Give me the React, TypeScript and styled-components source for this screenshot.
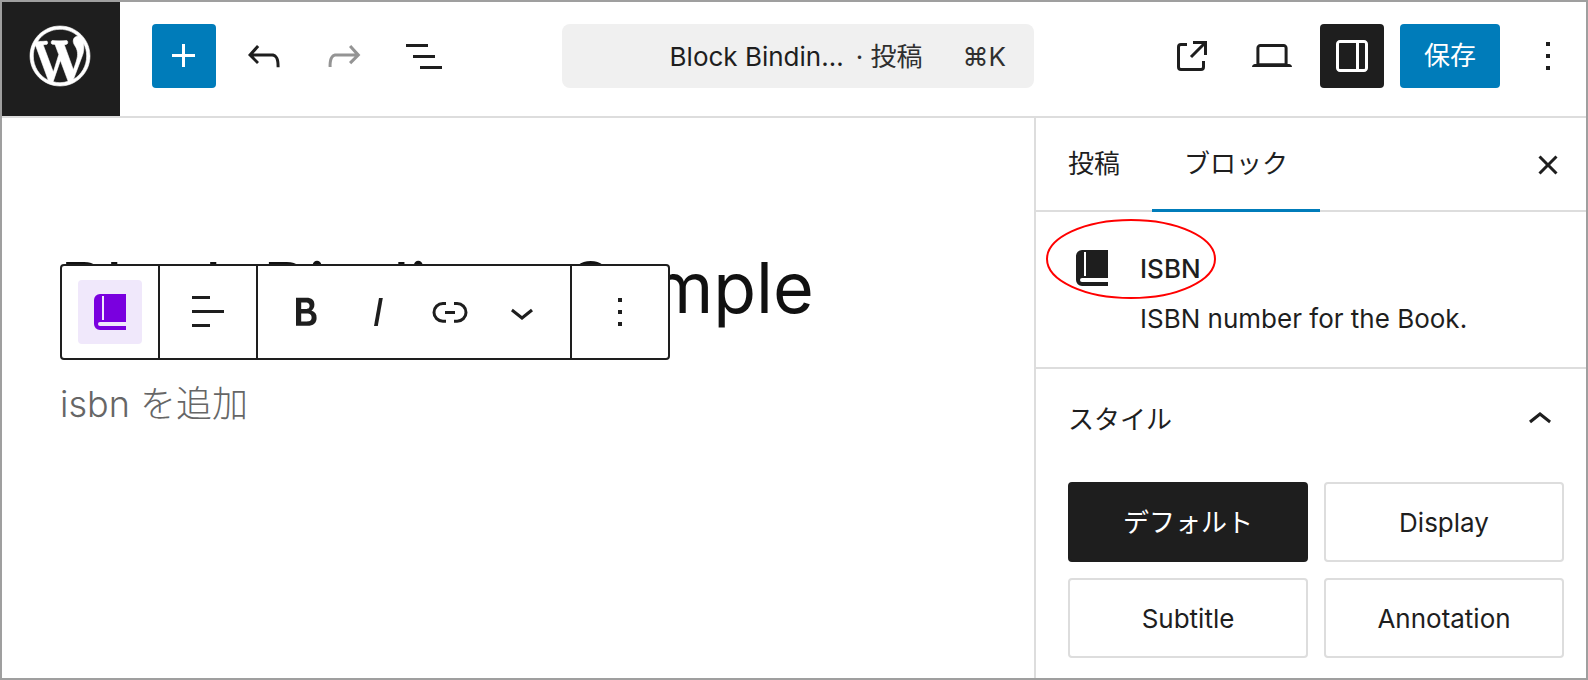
import React from "react";
import styled, { createGlobalStyle, css } from "styled-components";

const ink = "#1e1e1e";
const blue = "#007cba";
const line = "#dddddd";

const GlobalStyle = createGlobalStyle`
  *, *::before, *::after { box-sizing: border-box; }
  body {
    margin: 0;
    color: ${ink};
    background: #fff;
    font-family: Inter, "Noto Sans CJK JP", sans-serif;
    font-size: 26px;
    line-height: 36px;
  }
  button, input { font: inherit; color: inherit; }
`;

const Frame = styled.div`
  display: flex;
  flex-direction: column;
  min-height: 100vh;
  border: 2px solid #9f9f9f;
`;

const Header = styled.header`
  display: flex;
  align-items: center;
  padding-right: 6px;
  border-bottom: 2px solid ${line};
`;

const HomeLink = styled.a`
  display: flex;
  align-items: center;
  justify-content: center;
  width: 118px;
  height: 114px;
  padding: 0 2px 6px 0;
  flex: none;
  color: #fff;
  background: ${ink};
`;

const Tools = styled.div`
  display: flex;
  flex: none;
  gap: 16px;
  padding-bottom: 6px;
`;

const StartTools = styled(Tools)`
  margin-left: 32px;
`;

type Tone = "plain" | "primary" | "pressed" | "block";

const tones = {
  plain: css`background: transparent;`,
  primary: css`background: ${blue}; color: #fff;`,
  pressed: css`background: ${ink}; color: #fff;`,
  block: css`background: #f0e8fb; color: #7a00df;`,
};

const Button = styled.button<{ $tone?: Tone; $wide?: boolean }>`
  display: flex;
  align-items: center;
  justify-content: center;
  min-width: ${(p) => (p.$wide ? 72 : 64)}px;
  height: 64px;
  padding: 0;
  border: 0;
  border-radius: 4px;
  ${(p) => tones[p.$tone ?? "plain"]}
  &:disabled { color: #949494; }
`;

const SaveButton = styled(Button)`
  padding: 0 24px;
`;

const DocumentBar = styled.button`
  display: flex;
  flex: 1;
  align-items: center;
  justify-content: flex-end;
  min-width: 0;
  height: 64px;
  margin: 0 126px 6px 106px;
  padding: 2px 28px 0;
  border: 0;
  border-radius: 8px;
  background: #f0f0f0;
  white-space: nowrap;
`;

const DocumentType = styled.span`
  margin-left: 12px;
  color: #2f2f2f;
`;

const Shortcut = styled.span`
  margin-left: 40px;
  color: #2f2f2f;
`;

const Body = styled.div`
  display: flex;
  flex: 1;
`;

const Canvas = styled.main`
  flex: 1;
  min-width: 0;
  padding: 126px 58px 0;
`;

const TitleArea = styled.div`
  position: relative;
`;

const Title = styled.h1`
  margin: 0;
  font-size: 70px;
  font-weight: 400;
  line-height: 88px;
  color: #111;
  white-space: nowrap;
`;

const BlockToolbar = styled.div`
  position: absolute;
  top: 20px;
  left: 0;
  display: flex;
  border: 2px solid ${ink};
  border-radius: 4px;
  background: #fff;
`;

const ToolbarGroup = styled.div<{ $tight?: boolean }>`
  display: flex;
  padding: 14px ${(p) => (p.$tight ? 12 : 16)}px;
  & + & { border-left: 2px solid ${ink}; }
`;

const IsbnField = styled.input`
  display: block;
  width: 100%;
  margin-top: 44px;
  padding: 0;
  border: 0;
  outline: 0;
  font-size: 36px;
  font-weight: 300;
  line-height: 56px;
  &::placeholder { color: #666; opacity: 1; }
`;

const Sidebar = styled.aside`
  width: 552px;
  flex: none;
  border-left: 2px solid ${line};
`;

const TabBar = styled.div`
  display: flex;
  align-items: stretch;
  height: 94px;
  padding-right: 6px;
  box-shadow: inset 0 -2px ${line};
`;

const Tab = styled.button<{ $active?: boolean }>`
  padding: 0 32px 2px;
  border: 0;
  background: transparent;
  box-shadow: ${(p) => (p.$active ? `inset 0 -3px ${blue}` : "none")};
`;

const CloseButton = styled(Button)`
  align-self: center;
  margin-left: auto;
`;

const BlockCard = styled.section`
  position: relative;
  display: flex;
  gap: 24px;
  padding: 32px 22px 30px 32px;
  border-bottom: 2px solid ${line};
`;

const CardIcon = styled.div`
  display: flex;
  justify-content: center;
  width: 48px;
  padding-top: 6px;
`;

const CardText = styled.div`
  display: flex;
  flex-direction: column;
  gap: 14px;
  padding-top: 7px;
`;

const CardTitle = styled.h2`
  margin: 0;
  font-size: 26px;
  font-weight: 500;
  line-height: 36px;
`;

const CardDescription = styled.p`
  margin: 0;
`;

const Callout = styled.svg`
  position: absolute;
  top: 6px;
  left: 9px;
`;

const StylesPanel = styled.section`
  padding: 0 22px 20px 32px;
`;

const PanelTitle = styled.h2`
  margin: 0;
  font-size: 26px;
  font-weight: 400;
`;

const PanelToggle = styled.button`
  display: flex;
  align-items: center;
  justify-content: space-between;
  width: 100%;
  height: 102px;
  padding: 0;
  border: 0;
  background: transparent;
`;

const StyleGrid = styled.div`
  display: grid;
  grid-template-columns: 1fr 1fr;
  gap: 16px;
  padding-top: 11px;
`;

const StyleButton = styled.button<{ $active?: boolean }>`
  height: 80px;
  padding: 1px 0 0;
  border: 2px solid ${(p) => (p.$active ? ink : line)};
  border-radius: 4px;
  color: ${(p) => (p.$active ? "#fff" : ink)};
  background: ${(p) => (p.$active ? ink : "#fff")};
`;

const icons = {
  plus: "M11 12.5V17.5H12.5V12.5H17.5V11H12.5V6H11V11H6V12.5H11Z",
  undo: "M18.3 11.7c-.6-.6-1.4-.9-2.3-.9H6.7l2.9-3.3-1.1-1-4.5 5L8.5 16l1-1-2.7-2.7H16c.5 0 .9.2 1.3.5 1 1 1 3.4 1 4.5v.3h1.5v-.2c0-1.5 0-4.3-1.5-5.7z",
  redo: "M15.6 6.5l-1.1 1 2.9 3.3H8c-.9 0-1.7.3-2.3.9-1.4 1.5-1.4 4.2-1.4 5.6v.2h1.5v-.3c0-1.1 0-3.5 1-4.5.3-.3.7-.5 1.3-.5h9.2L14.5 15l1.1 1.1 4.6-4.6-4.6-5z",
  listView: "M3 6h11v1.5H3V6Zm3.5 5.5h11V13h-11v-1.5ZM21 17H10v1.5h11V17Z",
  external: "M19.5 4.5h-7V6h4.44l-5.97 5.97 1.06 1.06L18 7.06v4.44h1.5v-7Zm-13 1a2 2 0 0 0-2 2v10a2 2 0 0 0 2 2h10a2 2 0 0 0 2-2v-3H17v3a.5.5 0 0 1-.5.5h-10a.5.5 0 0 1-.5-.5v-10a.5.5 0 0 1 .5-.5h3V5.5h-3Z",
  desktop: "M20.5 16h-.7V8c0-1.1-.9-2-2-2H6.2c-1.1 0-2 .9-2 2v8h-.7c-.8 0-1.5.7-1.5 1.5h20c0-.8-.7-1.5-1.5-1.5zM5.7 8c0-.3.2-.5.5-.5h11.6c.3 0 .5.2.5.5v7.6H5.7V8z",
  drawer: "M18 4H6c-1.1 0-2 .9-2 2v12c0 1.1.9 2 2 2h12c1.1 0 2-.9 2-2V6c0-1.1-.9-2-2-2zm-4 14.5H6c-.3 0-.5-.2-.5-.5V6c0-.3.2-.5.5-.5h8v13zm4.5-.5c0 .3-.2.5-.5.5h-2.5v-13H18c.3 0 .5.2.5.5v12z",
  more: "M13 19h-2v-2h2v2zm0-6h-2v-2h2v2zm0-6h-2V5h2v2z",
  align: "M13 5.5H4V4h9v1.5Zm7 7H4V11h16v1.5Zm-7 7H4V18h9v1.5Z",
  bold: "M14.7 11.3c1-.6 1.5-1.6 1.5-3 0-2.3-1.3-3.4-4-3.4H7v14h5.8c1.4 0 2.5-.3 3.3-1 .8-.7 1.2-1.7 1.2-2.9.1-1.9-.8-3.1-2.6-3.7zm-5.1-4h2.3c.6 0 1.1.1 1.4.4.3.3.5.7.5 1.2s-.2 1-.5 1.2c-.3.3-.8.4-1.4.4H9.6V7.3zm4.6 9c-.4.3-1 .4-1.7.4H9.6v-3.9h2.9c.7 0 1.3.2 1.7.5.4.3.6.8.6 1.5s-.2 1.2-.6 1.5z",
  italic: "M12.5 5L10 19h1.9l2.5-14z",
  link: "M10 17.389H8.444A5.194 5.194 0 1 1 8.444 7H10v1.5H8.444a3.694 3.694 0 0 0 0 7.389H10v1.5ZM14 7h1.556a5.194 5.194 0 0 1 0 10.39H14v-1.5h1.556a3.694 3.694 0 0 0 0-7.39H14V7Zm-4.5 6h5v-1.5h-5V13Z",
  chevronDown: "M17.5 11.6L12 16l-5.5-4.4.9-1.2L12 14l4.5-3.6 1 1.2z",
  chevronUp: "M6.5 12.4L12 8l5.5 4.4-.9 1.2L12 10l-4.5 3.6-1-1.2z",
  close: "M12 13.06l3.712 3.713 1.061-1.06L13.061 12l3.712-3.712-1.06-1.06L12 10.938 8.288 7.227l-1.061 1.06L10.939 12l-3.712 3.712 1.06 1.061L12 13.061z",
};

const Icon = ({ name }: { name: keyof typeof icons }) => (
  <svg width="48" height="48" viewBox="0 0 24 24" fill="currentColor" aria-hidden="true">
    <path d={icons[name]} />
  </svg>
);

const BookIcon = () => (
  <svg width="32" height="36" viewBox="0 0 32 36" fill="currentColor" aria-hidden="true">
    <path
      fillRule="evenodd"
      d="M6 0H32V28H6a2 2 0 0 0 0 4H32V36H6a6 6 0 0 1-6-6V6a6 6 0 0 1 6-6ZM8 2V26H10V2Z"
    />
  </svg>
);

const WordPressLogo = () => (
  <svg width="72" height="72" viewBox="-2 -2 24 24" fill="currentColor" stroke="currentColor" strokeWidth="0.2" aria-hidden="true">
    <path d="M20 10c0-5.51-4.49-10-10-10C4.48 0 0 4.49 0 10c0 5.52 4.48 10 10 10 5.51 0 10-4.48 10-10zM7.78 15.37L4.37 6.22c.55-.02 1.17-.08 1.17-.08.5-.06.44-1.13-.06-1.11 0 0-1.45.11-2.37.11-.18 0-.37 0-.58-.01C4.12 2.69 6.87 1.11 10 1.11c2.33 0 4.45.87 6.05 2.34-.68-.11-1.65.39-1.65 1.58 0 .74.45 1.36.9 2.1.35.61.55 1.36.55 2.46 0 1.49-1.4 5-1.4 5l-3.03-8.37c.54-.02.82-.17.82-.17.5-.05.44-1.25-.06-1.22 0 0-1.44.12-2.38.12-.87 0-2.33-.12-2.33-.12-.5-.03-.56 1.2-.06 1.22l.92.08 1.26 3.41zM17.41 10c.24-.64.74-1.87.43-4.25.7 1.29 1.05 2.71 1.05 4.25 0 3.29-1.73 6.24-4.4 7.78.97-2.59 1.94-5.2 2.92-7.78zM6.1 18.09C3.12 16.65 1.11 13.53 1.11 10c0-1.3.23-2.48.72-3.59C3.25 10.3 4.67 14.2 6.1 18.09zm4.03-6.63l2.58 6.98c-.86.29-1.76.45-2.71.45-.79 0-1.57-.11-2.29-.33.81-2.38 1.62-4.74 2.42-7.1z" />
  </svg>
);

const blockStyles = ["デフォルト", "Display", "Subtitle", "Annotation"];

export default function App() {
  return (
    <>
      <GlobalStyle />
      <Frame>
        <Header>
          <HomeLink href="#" aria-label="WordPress">
            <WordPressLogo />
          </HomeLink>
          <StartTools>
            <Button $tone="primary" aria-label="追加"><Icon name="plus" /></Button>
            <Button aria-label="元に戻す"><Icon name="undo" /></Button>
            <Button disabled aria-label="やり直す"><Icon name="redo" /></Button>
            <Button aria-label="リスト表示"><Icon name="listView" /></Button>
          </StartTools>
          <DocumentBar>
            <span>Block Bindin…</span>
            <DocumentType>· 投稿</DocumentType>
            <Shortcut>⌘K</Shortcut>
          </DocumentBar>
          <Tools>
            <Button aria-label="投稿を表示"><Icon name="external" /></Button>
            <Button aria-label="表示"><Icon name="desktop" /></Button>
            <Button $tone="pressed" aria-label="設定"><Icon name="drawer" /></Button>
            <SaveButton $tone="primary">保存</SaveButton>
            <Button aria-label="オプション"><Icon name="more" /></Button>
          </Tools>
        </Header>
        <Body>
          <Canvas>
            <TitleArea>
              <Title>Block Bindings Sample</Title>
              <BlockToolbar role="toolbar" aria-label="ブロックツール">
                <ToolbarGroup>
                  <Button $tone="block" aria-label="ISBN"><BookIcon /></Button>
                </ToolbarGroup>
                <ToolbarGroup>
                  <Button aria-label="配置"><Icon name="align" /></Button>
                </ToolbarGroup>
                <ToolbarGroup $tight>
                  <Button $wide aria-label="太字"><Icon name="bold" /></Button>
                  <Button $wide aria-label="イタリック"><Icon name="italic" /></Button>
                  <Button $wide aria-label="リンク"><Icon name="link" /></Button>
                  <Button $wide aria-label="さらに表示"><Icon name="chevronDown" /></Button>
                </ToolbarGroup>
                <ToolbarGroup>
                  <Button aria-label="オプション"><Icon name="more" /></Button>
                </ToolbarGroup>
              </BlockToolbar>
            </TitleArea>
            <IsbnField aria-label="isbn" placeholder="isbn を追加" />
          </Canvas>
          <Sidebar>
            <TabBar role="tablist">
              <Tab role="tab" aria-selected={false}>投稿</Tab>
              <Tab role="tab" aria-selected $active>ブロック</Tab>
              <CloseButton aria-label="閉じる"><Icon name="close" /></CloseButton>
            </TabBar>
            <BlockCard>
              <CardIcon><BookIcon /></CardIcon>
              <CardText>
                <CardTitle>ISBN</CardTitle>
                <CardDescription>ISBN number for the Book.</CardDescription>
              </CardText>
              <Callout width="172" height="82" viewBox="0 0 172 82" aria-hidden="true">
                <ellipse cx="86" cy="41" rx="84" ry="39" fill="none" stroke="#ff0000" strokeWidth="2" />
              </Callout>
            </BlockCard>
            <StylesPanel>
              <PanelTitle>
                <PanelToggle aria-expanded>
                  スタイル
                  <Icon name="chevronUp" />
                </PanelToggle>
              </PanelTitle>
              <StyleGrid>
                {blockStyles.map((name, i) => (
                  <StyleButton key={name} $active={i === 0}>{name}</StyleButton>
                ))}
              </StyleGrid>
            </StylesPanel>
          </Sidebar>
        </Body>
      </Frame>
    </>
  );
}
